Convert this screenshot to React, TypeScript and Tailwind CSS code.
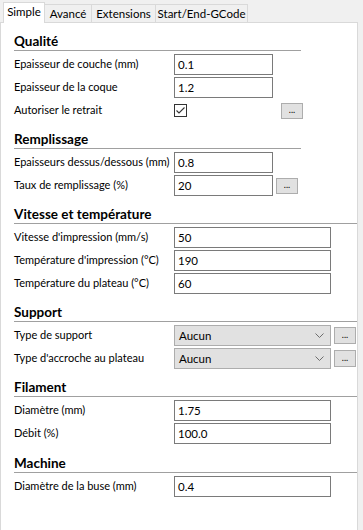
import { ReactNode } from 'react';

const font = { fontFamily: 'Lato, "Noto Sans", Arial, sans-serif' };

const Field = ({ value, wide }: { value: string; wide?: boolean }) => (
  <div className={`h-[21px] ${wide ? 'w-[157px]' : 'w-[99px]'} border border-[#7a7a7a] bg-white pl-[3px] flex items-center text-[11.5px] text-black`}>
    {value}
  </div>
);

const Dots = ({ small }: { small?: boolean }) => (
  <div className={`${small ? 'h-[17px]' : 'h-[16px]'} w-[22px] border border-[#adadad] bg-[#e1e1e1] flex items-center justify-center text-[9px] leading-none pb-[2px] text-black`}>
    ...
  </div>
);

const Select = ({ value }: { value: string }) => (
  <div className="h-[21px] w-[157px] border border-[#adadad] bg-[#e1e1e1] pl-[4px] pr-[6px] flex items-center justify-between text-[11.5px]">
    <span>{value}</span>
    <svg width="9" height="5" viewBox="0 0 9 5">
      <path d="M0.5 0.5 L4.5 4.5 L8.5 0.5" fill="none" stroke="#6d6d6d" strokeWidth="1" />
    </svg>
  </div>
);

const Check = () => (
  <div className="h-[13px] w-[13px] border border-[#333333] bg-white flex items-center justify-center">
    <svg width="11" height="11" viewBox="0 0 11 11">
      <path d="M1.5 5.5 L4 8 L9.5 2.5" fill="none" stroke="#333333" strokeWidth="1.1" />
    </svg>
  </div>
);

const Row = ({ label, children }: { label: string; children: ReactNode }) => (
  <div className="h-[21px] flex items-center">
    <div className="w-[160px] shrink-0 text-[11px] whitespace-nowrap">{label}</div>
    <div className="flex items-center gap-[3px]">{children}</div>
  </div>
);

const Section = ({ title, narrow, mt, children }: { title: string; narrow?: boolean; mt: string; children: ReactNode }) => (
  <div className={mt}>
    <div className={`${narrow ? 'w-[287px]' : 'w-full'} text-[13.5px] font-bold leading-[16px] pb-[1px] border-b border-[#a0a0a0]`}>
      {title}
    </div>
    <div className="mt-[3px] flex flex-col gap-[2px]">{children}</div>
  </div>
);

export default function App() {
  const tabs = [
    { t: 'Avancé', w: 'w-[47px]' },
    { t: 'Extensions', w: 'w-[64px]' },
    { t: 'Start/End-GCode', w: 'w-[92px]' },
  ];
  return (
    <div className="w-[363px] h-[530px] overflow-hidden bg-[#f0f0f0] text-black flex flex-col" style={font}>
      <div className="h-[22px] flex items-end pl-[3px]">
        <div className="h-[21px] w-[42px] relative z-10 -mb-px bg-white border border-b-0 border-[#d9d9d9] text-[11.5px] leading-[18px] text-center whitespace-nowrap">
          Simple
        </div>
        {tabs.map(tab => (
          <div key={tab.t} className={`h-[18px] ${tab.w} bg-[#f0f0f0] border border-l-0 border-b-0 border-[#d9d9d9] text-[11.5px] leading-[17px] text-center whitespace-nowrap`}>
            {tab.t}
          </div>
        ))}
      </div>
      <div className="w-[358px] flex-1 bg-white border border-b-0 border-[#d9d9d9] pl-[13px]">
        <Section title="Qualité" narrow mt="mt-[10px]">
          <Row label="Epaisseur de couche (mm)"><Field value="0.1" /></Row>
          <Row label="Epaisseur de la coque"><Field value="1.2" /></Row>
          <Row label="Autoriser le retrait">
            <Check />
            <div className="w-[88px]" />
            <Dots />
          </Row>
        </Section>
        <Section title="Remplissage" narrow mt="mt-[10px]">
          <Row label="Epaisseurs dessus/dessous (mm)"><Field value="0.8" /></Row>
          <Row label="Taux de remplissage (%)"><Field value="20" /><Dots /></Row>
        </Section>
        <Section title="Vitesse et température" mt="mt-[10px]">
          <Row label="Vitesse d'impression (mm/s)"><Field value="50" wide /></Row>
          <Row label="Température d'impression (°C)"><Field value="190" wide /></Row>
          <Row label="Température du plateau (°C)"><Field value="60" wide /></Row>
        </Section>
        <Section title="Support" mt="mt-[10px]">
          <Row label="Type de support"><Select value="Aucun" /><Dots small /></Row>
          <Row label="Type d'accroche au plateau"><Select value="Aucun" /><Dots small /></Row>
        </Section>
        <Section title="Filament" mt="mt-[10px]">
          <Row label="Diamètre (mm)"><Field value="1.75" wide /></Row>
          <Row label="Débit (%)"><Field value="100.0" wide /></Row>
        </Section>
        <Section title="Machine" mt="mt-[11px]">
          <Row label="Diamètre de la buse (mm)"><Field value="0.4" wide /></Row>
        </Section>
      </div>
    </div>
  );
}
